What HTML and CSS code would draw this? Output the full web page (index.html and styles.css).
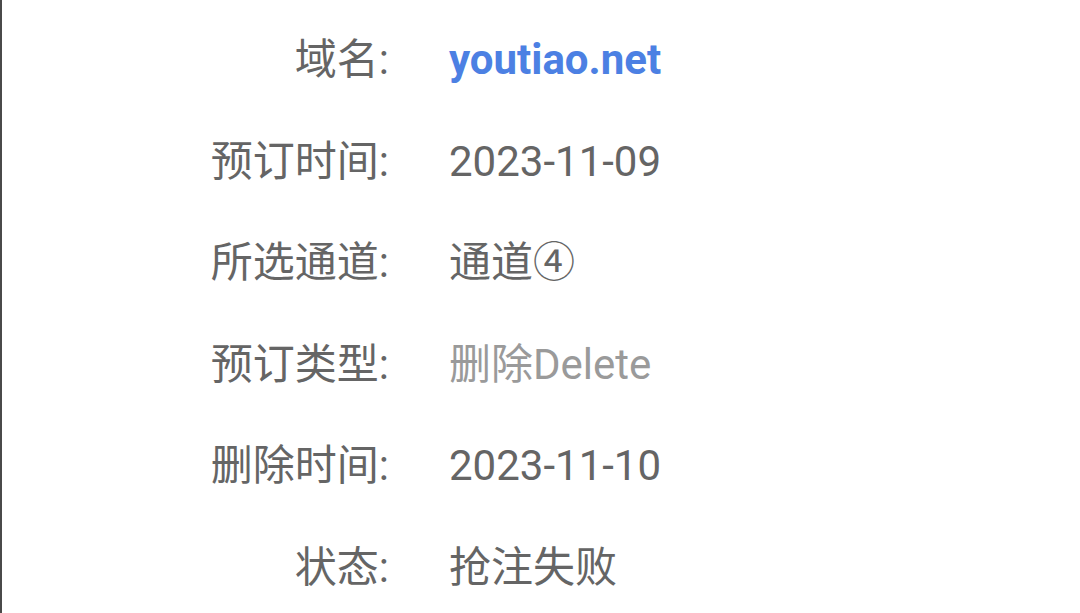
FILE: index.html
```html
<!DOCTYPE html>
<html lang="zh-CN">
<head>
<meta charset="utf-8">
<link rel="stylesheet" href="styles.css">
</head>
<body>
<div class="screen">
  <dl class="info">
    <dt>域名:</dt><dd class="domain">youtiao.net</dd>
    <dt>预订时间:</dt><dd>2023-11-09</dd>
    <dt>所选通道:</dt><dd>通道④</dd>
    <dt>预订类型:</dt><dd class="muted">删除Delete</dd>
    <dt>删除时间:</dt><dd>2023-11-10</dd>
    <dt>状态:</dt><dd>抢注失败</dd>
  </dl>
</div>
</body>
</html>
```
FILE: styles.css
```css
html, body {
  margin: 0;
  padding: 0;
  background: #ffffff;
}
.screen {
  width: 1080px;
  height: 613px;
  box-sizing: border-box;
  border-left: 2px solid #4a4a4a;
  overflow: hidden;
  font-family: Roboto, "Noto Sans CJK SC", sans-serif;
  color: #656565;
}
.info {
  margin: 0;
  padding-top: 9px;
  display: grid;
  grid-template-columns: 387px auto;
  column-gap: 60px;
  font-size: 42px;
  line-height: 101.6px;
}
.info dt {
  text-align: right;
  margin: 0;
}
.info dd {
  margin: 0;
}
.domain {
  color: #4c80e3;
  font-weight: 700;
}
.muted {
  color: #9a9a9a;
}
```
